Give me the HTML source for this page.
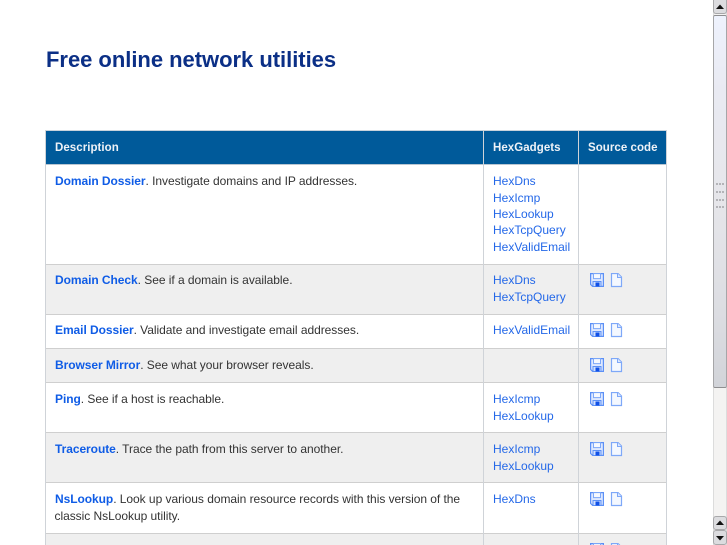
<!DOCTYPE html>
<html><head><meta charset="utf-8"><style>
html,body{margin:0;padding:0;width:727px;height:545px;overflow:hidden;background:#fff}
body{font-family:"Liberation Sans",sans-serif;font-size:12px;color:#333;position:relative}
#w{position:absolute;left:0;top:0;width:727px;height:545px;overflow:hidden;filter:blur(.35px)}
.a{position:absolute;white-space:nowrap}
.t{position:absolute;white-space:nowrap;line-height:16.4px;letter-spacing:-.04px}
b{color:#0f5ce6;font-weight:bold;letter-spacing:-.06px}
.h{color:#2468e8;letter-spacing:0;line-height:16px}
.h span{display:block;height:17px}
.h span.s{height:16px}
.th{position:absolute;color:#eef2f7;font-weight:bold;font-size:11.5px;line-height:16px;white-space:nowrap;top:139.5px;letter-spacing:.05px}
h1{position:absolute;left:46px;top:46px;margin:0;font-size:22px;line-height:27px;color:#0b2f86;white-space:nowrap;letter-spacing:-.03px}
svg{position:absolute}
</style></head><body><div id="w">
<h1>Free online network utilities</h1>

<!-- table backgrounds -->
<div class="a" style="left:45px;top:130px;width:622px;height:35px;background:#005a9a"></div>
<div class="a" style="left:46px;top:265px;width:621px;height:49px;background:#efefef"></div>
<div class="a" style="left:46px;top:349px;width:621px;height:34px;background:#efefef"></div>
<div class="a" style="left:46px;top:433px;width:621px;height:50px;background:#efefef"></div>
<div class="a" style="left:46px;top:534px;width:621px;height:11px;background:#efefef"></div>
<!-- horizontal lines -->
<div class="a" style="left:45px;top:130px;width:622px;height:1px;background:#c9d3dc"></div>
<div class="a" style="left:45px;top:164px;width:622px;height:1px;background:#b9c6d2"></div>
<div class="a" style="left:45px;top:264px;width:622px;height:1px;background:#cfcfcf"></div>
<div class="a" style="left:45px;top:314px;width:622px;height:1px;background:#cfcfcf"></div>
<div class="a" style="left:45px;top:348px;width:622px;height:1px;background:#cfcfcf"></div>
<div class="a" style="left:45px;top:382px;width:622px;height:1px;background:#cfcfcf"></div>
<div class="a" style="left:45px;top:432px;width:622px;height:1px;background:#cfcfcf"></div>
<div class="a" style="left:45px;top:482px;width:622px;height:1px;background:#cfcfcf"></div>
<div class="a" style="left:45px;top:533px;width:622px;height:1px;background:#cfcfcf"></div>
<!-- vertical lines -->
<div class="a" style="left:45px;top:130px;width:1px;height:415px;background:#cfd3d8"></div>
<div class="a" style="left:483px;top:130px;width:1px;height:415px;background:#cfd3d8"></div>
<div class="a" style="left:578px;top:130px;width:1px;height:415px;background:#cfd3d8"></div>
<div class="a" style="left:666px;top:130px;width:1px;height:415px;background:#cfd3d8"></div>

<div class="th" style="left:55px">Description</div>
<div class="th" style="left:493px">HexGadgets</div>
<div class="th" style="left:588px">Source code</div>

<div class="t" style="left:55px;top:173px"><b>Domain Dossier</b>. Investigate domains and IP addresses.</div>
<div class="t h" style="left:493px;top:173px"><span>HexDns</span><span class="s">HexIcmp</span><span class="s">HexLookup</span><span>HexTcpQuery</span><span>HexValidEmail</span></div>

<div class="t" style="left:55px;top:272px"><b>Domain Check</b>. See if a domain is available.</div>
<div class="t h" style="left:493px;top:272px"><span>HexDns</span><span>HexTcpQuery</span></div>

<div class="t" style="left:55px;top:322px"><b>Email Dossier</b>. Validate and investigate email addresses.</div>
<div class="t h" style="left:493px;top:322px"><span>HexValidEmail</span></div>

<div class="t" style="left:55px;top:357px"><b>Browser Mirror</b>. See what your browser reveals.</div>

<div class="t" style="left:55px;top:391px"><b>Ping</b>. See if a host is reachable.</div>
<div class="t h" style="left:493px;top:391px"><span>HexIcmp</span><span>HexLookup</span></div>

<div class="t" style="left:55px;top:441px"><b>Traceroute</b>. Trace the path from this server to another.</div>
<div class="t h" style="left:493px;top:441px"><span>HexIcmp</span><span>HexLookup</span></div>

<div class="t" style="left:55px;top:491px;line-height:17px"><b>NsLookup</b>. Look up various domain resource records with this version of the<br><span style="margin-left:-.5px">classic NsLookup utility.</span></div>
<div class="t h" style="left:493px;top:491px"><span>HexDns</span></div>

<svg width="0" height="0" style="position:absolute"><defs>
<symbol id="ic" viewBox="0 0 40 15" overflow="visible">
<path d="M.6.6H13.4V13.4H2.6L.6 11.4Z" fill="#dfe9ff" stroke="#5c90f6" stroke-width="1.2"/>
<rect x="3.5" y=".6" width="7" height="5" fill="#f6f9ff" stroke="#7ea8f8"/>
<rect x="3" y="8.5" width="8" height="5" fill="#cfe0ff" stroke="#5c90f6"/>
<rect x="5.5" y="9.5" width="4" height="4" fill="#1050e6"/>
<path d="M21.5.5H28L31.5 4V13.5H21.5Z" fill="#f4f8ff" stroke="#7ea8f8" stroke-width="1.2"/>
<path d="M27.5.5V4.5H31.5" fill="#dce8ff" stroke="#7ea8f8"/>
</symbol></defs></svg>
<svg style="left:590px;top:273px" width="40" height="15"><use href="#ic"/></svg>
<svg style="left:590px;top:323px" width="40" height="15"><use href="#ic"/></svg>
<svg style="left:590px;top:358px" width="40" height="15"><use href="#ic"/></svg>
<svg style="left:590px;top:392px" width="40" height="15"><use href="#ic"/></svg>
<svg style="left:590px;top:442px" width="40" height="15"><use href="#ic"/></svg>
<svg style="left:590px;top:492px" width="40" height="15"><use href="#ic"/></svg>
<svg style="left:590px;top:543px" width="40" height="15"><use href="#ic"/></svg>

<!-- scrollbar -->
<div class="a" style="left:713px;top:0;width:14px;height:545px;background:#f4f3f2;box-shadow:inset 1px 0 0 #dcdcdc,inset -1px 0 0 #dcdcdc"></div>
<div class="a" style="left:713px;top:0;width:14px;height:14px;background:#dcdcdf;border:1px solid #a8a8aa;border-top:0;box-sizing:border-box;border-radius:0 0 3px 3px"></div>
<div class="a" style="left:713px;top:15px;width:14px;height:373px;background:linear-gradient(180deg,#eef2fd 0,#e9eaf2 20%,#e6e6ea 50%,#dcdde2 80%,#d2d4d9 100%);border:1px solid #a6a6a8;border-top-color:#8e8e90;border-bottom-color:#8e8e90;box-sizing:border-box;border-radius:2px"></div>
<svg style="left:713px;top:183px" width="14" height="28"><g fill="#b4b4b8"><path d="M3 0h2v2h-2zM6 0h2v2h-2zM9 0h2v2h-2zM3 8h2v2h-2zM6 8h2v2h-2zM9 8h2v2h-2zM3 16h2v2h-2zM6 16h2v2h-2zM9 16h2v2h-2zM3 23h2v2h-2zM6 23h2v2h-2zM9 23h2v2h-2z"/></g></svg>
<div class="a" style="left:713px;top:516px;width:14px;height:14px;background:#dcdcdf;border:1px solid #a8a8aa;box-sizing:border-box;border-radius:3px"></div>
<div class="a" style="left:713px;top:530px;width:14px;height:15px;background:#dcdcdf;border:1px solid #a8a8aa;box-sizing:border-box;border-radius:3px"></div>
<svg style="left:713px;top:0" width="14" height="14"><path d="M3 9H11L7 4.5Z" fill="#111"/></svg>
<svg style="left:713px;top:516px" width="14" height="14"><path d="M3 9H11L7 4.5Z" fill="#111"/></svg>
<svg style="left:713px;top:530px" width="14" height="15"><path d="M3 6H11L7 10.5Z" fill="#111"/></svg>
</div></body></html>
